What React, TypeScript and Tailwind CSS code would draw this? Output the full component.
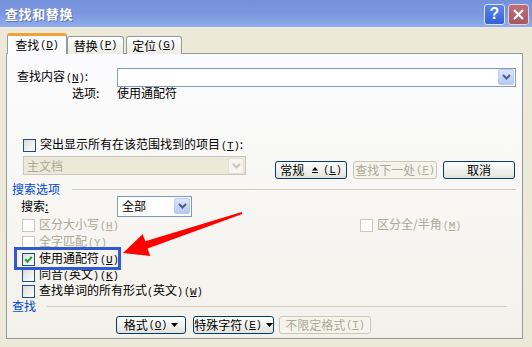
import React from 'react';

const font = { fontFamily: '"Noto Sans CJK SC", "Noto Sans", sans-serif' };
const mono = { fontFamily: '"Liberation Mono", monospace' };

// half-width parenthesis, like the old bitmap font
const P = ({ c }: { c: string }) => (
  <span className="text-[10px]" style={mono}>
    {c}
  </span>
);

// accelerator key, e.g. (D) with underlined letter
const Acc = ({ k }: { k: string }) => (
  <span className="ml-[1px] text-[10px]" style={mono}>
    (<span className="text-[11px] underline underline-offset-[1px]">{k}</span>)
  </span>
);

// renders a label, swapping ( and ) for half-width ones
const Label = ({ text }: { text: string }) => (
  <>
    {text.split(/([()])/).map((part, i) =>
      part === '(' || part === ')' ? <P key={i} c={part} /> : <React.Fragment key={i}>{part}</React.Fragment>
    )}
  </>
);

const Check = ({ checked = false, disabled = false }: { checked?: boolean; disabled?: boolean }) => (
  <span
    className={
      disabled
        ? 'inline-flex w-[13px] h-[13px] shrink-0 items-center justify-center border border-[#C9C7BA] bg-white'
        : 'inline-flex w-[13px] h-[13px] shrink-0 items-center justify-center border border-[#1C5180] bg-linear-to-br from-[#DCDCD7] to-white'
    }
  >
    {checked && (
      <svg width="9" height="9" viewBox="0 0 9 9">
        <path d="M1.2 4.3 L3.5 6.8 L7.8 1.8" fill="none" stroke="#21A121" strokeWidth="2" />
      </svg>
    )}
  </span>
);

const DropBtn = ({ disabled = false }: { disabled?: boolean }) => (
  <span
    className={
      disabled
        ? 'flex w-[16px] h-[16px] items-center justify-center rounded-[2px] border border-[#E2E0D4] bg-[#F5F4EE]'
        : 'flex w-[16px] h-[16px] items-center justify-center rounded-[2px] border border-[#B9CBF3] bg-linear-to-b from-[#DCE6FD] to-[#B4C8F7]'
    }
  >
    <svg width="9" height="6" viewBox="0 0 9 6">
      <path d="M1 1 L4.5 4.5 L8 1" fill="none" stroke={disabled ? '#C9C7BA' : '#4D6185'} strokeWidth="2" />
    </svg>
  </span>
);

const Caret = () => (
  <svg width="7" height="4" viewBox="0 0 7 4" className="ml-[4px] shrink-0">
    <path d="M0 0 H7 L3.5 4 Z" fill="#000" />
  </svg>
);

const Btn = ({ className, disabled = false, children }: { className: string; disabled?: boolean; children: React.ReactNode }) => (
  <div
    className={`${className} h-[18px] shrink-0 whitespace-nowrap flex items-center justify-center rounded-[3px] border ${
      disabled
        ? 'border-[#C9C7BA] bg-[#F5F4EA] text-[#ACA899]'
        : 'border-[#003C74] bg-linear-to-b from-white to-[#E3E2DA] text-black'
    }`}
  >
    {children}
  </div>
);

const CheckRow = ({ label, k, checked, disabled }: { label: string; k: string; checked?: boolean; disabled?: boolean }) => (
  <div className="flex items-center">
    <Check checked={checked} disabled={disabled} />
    <span className={`ml-[4px] whitespace-nowrap ${disabled ? 'text-[#ACA899]' : 'text-black'}`}>
      <Label text={label} />
      <Acc k={k} />
    </span>
  </div>
);

export default function App() {
  return (
    <div className="relative w-[532px] h-[347px] overflow-hidden bg-[#ECE9D8] text-[12px] leading-[14px] text-black" style={font}>
      {/* Title bar */}
      <div className="h-[27px] flex items-center justify-between pl-[5px] pr-[3px] bg-linear-to-b from-[#7591DB] via-[#7C97DF] to-[#8FADEB]">
        <span className="text-white font-bold text-[13px] tracking-[0.6px] [text-shadow:1px_1px_0_#5a72b8]">查找和替换</span>
        <div className="flex gap-[3px] mt-[1px]">
          <div className="w-[21px] h-[21px] rounded-[3px] border border-[#DCE4FA] bg-linear-to-b from-[#5A86EE] to-[#3560D8] flex items-center justify-center text-white font-bold text-[16px]" style={{ fontFamily: '"Liberation Sans", sans-serif' }}>
            ?
          </div>
          <div className="w-[21px] h-[21px] rounded-[3px] border border-[#E8D0D4] bg-linear-to-b from-[#BE7079] to-[#A6575F] flex items-center justify-center">
            <svg width="13" height="13" viewBox="0 0 13 13">
              <path d="M2 2 L11 11 M11 2 L2 11" stroke="#fff" strokeWidth="2.2" />
            </svg>
          </div>
        </div>
      </div>

      {/* Tabs */}
      <div className="flex items-end pl-[7px] mt-[6px] h-[21px] -mb-px relative z-10 whitespace-nowrap">
        <div className="w-[60px] h-[21px] rounded-t-[3px] border-x border-[#919B9C] border-t-[3px] border-t-[#F0A33A] bg-[#FCFCFE] flex items-center justify-center">
          查找<Acc k="D" />
        </div>
        <div className="w-[57px] h-[18px] rounded-t-[3px] border border-b-0 border-[#919B9C] bg-linear-to-b from-white to-[#ECEBE6] flex items-center justify-center">
          替换<Acc k="P" />
        </div>
        <div className="ml-[2px] w-[56px] h-[18px] rounded-t-[3px] border border-b-0 border-[#919B9C] bg-linear-to-b from-white to-[#ECEBE6] flex items-center justify-center">
          定位<Acc k="G" />
        </div>
      </div>

      {/* Panel */}
      <div className="ml-[6px] w-[517px] h-[286px] border border-[#919B9C] bg-linear-to-b from-[#FCFCFE] to-[#F2F1EA] flex flex-col">
        <div className="mt-[14px] h-[18px] flex items-center pl-[10px]">
          <span className="w-[100px] whitespace-nowrap">
            查找内容<Acc k="N" />:
          </span>
          <div className="w-[399px] h-[19px] border border-[#7F9DB9] bg-white flex items-center justify-end pr-[1px]">
            <DropBtn />
          </div>
        </div>
        <div className="h-[14px] flex items-center pl-[65px]">
          <span className="w-[45px]">选项:</span>
          <span>使用通配符</span>
        </div>

        <div className="mt-[39px] h-[13px] flex items-center pl-[16px]">
          <Check />
          <span className="ml-[4px] whitespace-nowrap">
            突出显示所有在该范围找到的项目<Acc k="T" />:
          </span>
        </div>

        <div className="mt-[4px] flex items-start pl-[16px]">
          <div className="w-[223px] h-[19px] border border-[#C9C7BA] bg-[#ECE9D8] flex items-center justify-between pl-[3px] pr-[1px] text-[#ACA899]">
            <span>主文档</span>
            <DropBtn disabled />
          </div>
          <div className="flex mt-[5px] ml-[29px] gap-[6px]">
            <Btn className="w-[72px]">
              常规
              <svg width="6" height="6" viewBox="0 0 6 6" className="ml-[8px] mr-[4px] shrink-0">
                <path d="M3 0 L6 3.5 H0 Z M0 5 H6 V6 H0 Z" fill="#000" />
              </svg>
              <Acc k="L" />
            </Btn>
            <Btn className="w-[84px]" disabled>
              查找下一处<Acc k="F" />
            </Btn>
            <Btn className="w-[72px]">取消</Btn>
          </div>
        </div>

        <div className="mt-[3px] h-[14px] flex items-center pl-[5px]">
          <span className="text-[#0046D5]">搜索选项</span>
          <div className="flex-1 h-px bg-[#D0D0BF] ml-[12px] mr-[6px] mt-[1px]" />
        </div>

        <div className="h-[20px] flex items-center pl-[14px]">
          <span className="w-[96px]">
            搜索<span className="underline">:</span>
          </span>
          <div className="w-[75px] h-[21px] border border-[#7F9DB9] bg-white flex items-center justify-between pl-[4px] pr-[1px]">
            <span>全部</span>
            <DropBtn />
          </div>
        </div>

        <div className="mt-[1px] flex flex-col pl-[15px]">
          <div className="h-[17px] flex items-center">
            <div className="w-[338px]">
              <CheckRow label="区分大小写" k="H" disabled />
            </div>
            <CheckRow label="区分全/半角" k="M" disabled />
          </div>
          <div className="h-[17px] flex items-center">
            <CheckRow label="全字匹配" k="Y" disabled />
          </div>
          <div className="h-[16px] flex items-center">
            <CheckRow label="使用通配符" k="U" checked />
          </div>
          <div className="h-[16px] flex items-center">
            <CheckRow label="同音(英文)" k="K" />
          </div>
          <div className="h-[16px] flex items-center">
            <CheckRow label="查找单词的所有形式(英文)" k="W" />
          </div>
        </div>

        <div className="h-[14px] flex items-center pl-[5px]">
          <span className="text-[#0046D5]">查找</span>
          <div className="flex-1 h-px bg-[#D0D0BF] ml-[11px] mr-[15px] mt-[1px]" />
        </div>

        <div className="mt-[3px] flex pl-[109px]">
          <Btn className="w-[70px]">
            格式<Acc k="O" />
            <Caret />
          </Btn>
          <Btn className="ml-[7px] w-[81px]">
            特殊字符<Acc k="E" />
            <Caret />
          </Btn>
          <Btn className="ml-[5px] w-[92px]" disabled>
            不限定格式<Acc k="T" />
          </Btn>
        </div>
      </div>

      {/* Annotation: highlight box and red arrow */}
      <div className="absolute left-[14px] top-[247px] w-[107px] h-[23px] border-[3px] border-[#3259D4] pointer-events-none" />
      <svg className="absolute left-0 top-0 pointer-events-none" width="532" height="347" viewBox="0 0 532 347">
        <polygon
          points="123,253 150.2,256 147.6,248.6 242.3,213.9 241.7,212.1 145.4,241.2 142.6,234.2"
          fill="#FF0000"
        />
      </svg>
    </div>
  );
}
